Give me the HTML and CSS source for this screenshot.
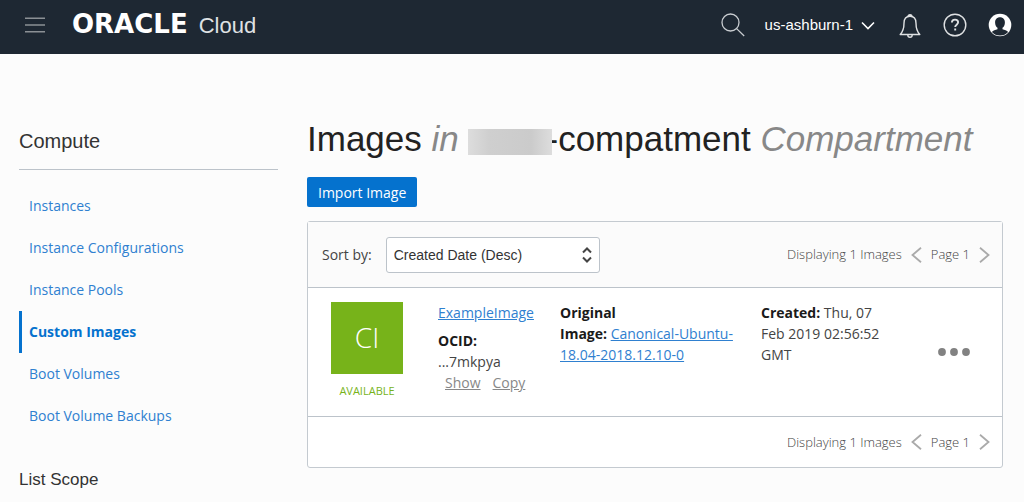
FILE: index.html
```html
<!DOCTYPE html>
<html lang="en">
<head>
<meta charset="utf-8">
<title>Custom Images - Oracle Cloud</title>
<link rel="stylesheet" href="styles.css">
</head>
<body>
<header class="topbar">
  <button class="icon-btn menu" aria-label="Menu">
    <svg width="20" height="16" viewBox="0 0 20 16" stroke="#8b9095" stroke-width="1.600"><path d="M0 1.200h20M0 8h20M0 14.800h20"/></svg>
  </button>
  <a class="brand" href="#"><span class="brand-name">ORACLE</span><span class="brand-product">Cloud</span></a>
  <button class="icon-btn search" aria-label="Search">
    <svg width="24" height="24" viewBox="0 0 24 24" fill="none" stroke="#c9cdd1" stroke-width="1.300"><circle cx="9.500" cy="9.500" r="8.500"/><path d="M15.600 15.600l7.600 7.400"/></svg>
  </button>
  <button class="region">us-ashburn-1
    <svg width="14" height="9" viewBox="0 0 14 9" fill="none" stroke="#fff" stroke-width="1.600"><path d="M1 1.500l6 6 6-6"/></svg>
  </button>
  <button class="icon-btn bell" aria-label="Notifications">
    <svg width="22" height="25" viewBox="0 0 22 25" fill="none" stroke="#dfe1e3" stroke-width="1.400" stroke-linejoin="round"><path d="M9 3.700a2 2 0 1 1 4 0M11 3.300c-4 0-6 3-6 7 0 6-1.200 8.500-3.800 11.200h19.600C18.200 18.800 17 16.300 17 10.300c0-4-2-7-6-7zM8.800 22a2.200 2.200 0 0 0 4.400 0"/></svg>
  </button>
  <button class="icon-btn help" aria-label="Help">
    <svg width="24" height="24" viewBox="0 0 24 24" fill="none" stroke="#dfe1e3" stroke-width="1.400"><circle cx="12" cy="12" r="10.800"/><path stroke-width="1.900" d="M8.900 9.600c0-1.900 1.300-3 3.100-3s3.100 1 3.100 2.700c0 2.300-2.900 2.400-2.900 4.700M12.200 15.600v2"/></svg>
  </button>
  <button class="icon-btn user" aria-label="Profile">
    <svg width="24" height="24" viewBox="0 0 24 24"><circle cx="12" cy="12" r="11.300" fill="#fff"/><path fill="#1e2833" d="M12 4.200c-3 0-4.900 2.100-4.900 5.200 0 2.400 1 4.300 2.400 5.300v1.500c-2 .8-4.500 1.200-5.600 2.700 2 2.300 4.900 3.600 8.100 3.600s6.100-1.300 8.100-3.600c-1.100-1.500-3.600-1.900-5.600-2.700v-1.500c1.400-1 2.400-2.900 2.400-5.300 0-3.100-1.900-5.200-4.900-5.200z"/><path fill="#fff" d="M9.600 8.500h4.800v.1z"/></svg>
  </button>
</header>
<div class="layout">
  <aside class="sidebar">
    <h2 class="side-title">Compute</h2>
    <nav>
      <ul class="side-nav">
        <li><a href="#">Instances</a></li>
        <li><a href="#">Instance Configurations</a></li>
        <li><a href="#">Instance Pools</a></li>
        <li><a class="current" href="#" aria-current="page">Custom Images</a></li>
        <li><a href="#">Boot Volumes</a></li>
        <li><a href="#">Boot Volume Backups</a></li>
      </ul>
    </nav>
    <h3 class="scope-title">List Scope</h3>
  </aside>
  <main class="content">
    <h1 class="page-title">Images <em>in</em> <span class="redacted"></span>-compatment <em>Compartment</em></h1>
    <button class="primary">Import Image</button>
    <section class="panel">
      <div class="toolbar">
        <label for="sort">Sort by:</label>
        <div class="select-wrap">
          <select id="sort"><option>Created Date (Desc)</option></select>
          <svg class="select-arrows" width="10" height="16" viewBox="0 0 10 16" fill="none" stroke="#444" stroke-width="2"><path d="M1 5.500l4-4 4 4M1 10.500l4 4 4-4"/></svg>
        </div>
        <div class="pager">
          <span>Displaying 1 Images</span>
          <button class="page-btn" aria-label="Previous page"><svg width="11" height="16" viewBox="0 0 11 16" fill="none" stroke="#aaa" stroke-width="1.800"><path d="M10 .8L1.500 8l8.500 7.200"/></svg></button>
          <span>Page 1</span>
          <button class="page-btn" aria-label="Next page"><svg width="11" height="16" viewBox="0 0 11 16" fill="none" stroke="#aaa" stroke-width="1.800"><path d="M1 .8L9.500 8 1 15.200"/></svg></button>
        </div>
      </div>
      <article class="image-row">
        <div class="status"><div class="tile">CI</div><div class="state">AVAILABLE</div></div>
        <div class="identity">
          <a href="#">ExampleImage</a>
          <div class="ocid"><b>OCID:</b><br>...7mkpya<br><span class="ocid-actions"><a href="#">Show</a><a href="#">Copy</a></span></div>
        </div>
        <div><b>Original<br>Image:</b> <a href="#">Canonical-Ubuntu-<br>18.04-2018.12.10-0</a></div>
        <div><b>Created:</b> Thu, 07<br>Feb 2019 02:56:52<br>GMT</div>
        <button class="more" aria-label="Actions"><svg width="32" height="8" viewBox="0 0 32 8" fill="#828282"><circle cx="4" cy="4" r="3.900"/><circle cx="16" cy="4" r="3.900"/><circle cx="28" cy="4" r="3.900"/></svg></button>
      </article>
      <div class="footer">
        <div class="pager">
          <span>Displaying 1 Images</span>
          <button class="page-btn" aria-label="Previous page"><svg width="11" height="16" viewBox="0 0 11 16" fill="none" stroke="#aaa" stroke-width="1.800"><path d="M10 .8L1.500 8l8.500 7.200"/></svg></button>
          <span>Page 1</span>
          <button class="page-btn" aria-label="Next page"><svg width="11" height="16" viewBox="0 0 11 16" fill="none" stroke="#aaa" stroke-width="1.800"><path d="M1 .8L9.500 8 1 15.200"/></svg></button>
        </div>
      </div>
    </section>
  </main>
</div>
</body>
</html>
```
FILE: styles.css
```css
* { box-sizing: border-box; }

body {
  margin: 0;
  background: #fcfcfc;
  color: #444;
  font: 14px/21px "Open Sans", "Noto Sans", sans-serif;
}

a { color: #2f80d0; }
b { color: #1a1a1a; }
svg { display: block; }
h1, h2, h3, ul { margin: 0; padding: 0; }

button {
  margin: 0;
  padding: 0;
  border: 0;
  background: none;
  color: inherit;
  font: inherit;
}

.topbar {
  display: flex;
  align-items: center;
  height: 54px;
  padding: 0 12px 4px 25px;
  background: #1e2833;
  color: #fff;
}

.brand {
  display: flex;
  align-items: baseline;
  gap: 11px;
  margin-left: 27px;
  color: #fff;
  text-decoration: none;
}

.brand-name { font: bold 26px/28px "DejaVu Sans", sans-serif; }
.brand-product { color: #dfe1e3; font: 22px/28px "Liberation Sans", sans-serif; }
.search { margin-left: auto; }

.region {
  display: flex;
  align-items: center;
  gap: 8px;
  margin: 0 24px 0 20px;
  font: 15px/20px "Liberation Sans", sans-serif;
}

.help { margin: 0 21px 0 22px; }

.layout {
  display: grid;
  grid-template-columns: 259px minmax(0, 1fr);
  column-gap: 29px;
  padding: 65px 21px 12px 19px;
}

.side-title {
  padding: 10px 0 16px;
  border-bottom: 1px solid #bcc3ca;
  color: #333;
  font: 20px/24px "Liberation Sans", sans-serif;
}

.side-nav {
  padding-top: 15px;
  list-style: none;
}

.side-nav a {
  display: block;
  padding-left: 7px;
  border-left: 3px solid transparent;
  line-height: 42px;
  text-decoration: none;
}

.side-nav .current {
  border-color: #0572ce;
  color: #0572ce;
  font-weight: bold;
}

.scope-title {
  padding-top: 32px;
  color: #333;
  font: 17px/22px "Liberation Sans", sans-serif;
}

.page-title {
  color: #222;
  font: 35px/40px "Liberation Sans", sans-serif;
}

.page-title em { color: #888; }

/* Masks the name and the start of the hyphen that follows it. */
.redacted {
  display: inline-block;
  position: relative;
  width: 84px;
  height: 26px;
  margin-right: -6px;
  background: linear-gradient(90deg, #ddd, #cfcfcf 25%, #cbcbcb 75%, #ddd);
  vertical-align: -4px;
}

.primary {
  display: block;
  height: 30px;
  margin: 18px 0 14px;
  padding: 0 11px;
  border-radius: 2px;
  background: #0572ce;
  color: #fff;
}

.panel {
  border: 1px solid #c4cad0;
  border-radius: 3px;
  background: #fff;
}

.toolbar {
  display: flex;
  align-items: center;
  gap: 14px;
  height: 65px;
  padding: 0 12px 0 14px;
  background: #fbfbfb;
}

.select-wrap { position: relative; }

select {
  width: 214px;
  height: 36px;
  padding: 0 7px;
  border: 1px solid #bcc3ca;
  border-radius: 3px;
  appearance: none;
  background: #fff;
  color: #333;
  font: 14px "Liberation Sans", sans-serif;
}

.select-arrows {
  position: absolute;
  top: 10px;
  right: 8px;
  pointer-events: none;
}

.pager {
  display: flex;
  align-items: center;
  gap: 9px;
  margin-left: auto;
  font-size: 13px;
  font-weight: 300;
}

.image-row {
  display: grid;
  grid-template-columns: 79px 94px 173px 149px 32px;
  column-gap: 28px;
  justify-content: start;
  height: 130px;
  padding: 14px 23px;
  border: solid #bcc3ca;
  border-width: 1px 0;
}

.status { width: 72px; }

.tile {
  height: 72px;
  background: #77b31a;
  color: #fff;
  font-size: 28px;
  font-weight: 300;
  line-height: 70px;
  text-align: center;
}

.state {
  margin-top: 6px;
  color: #77b31a;
  font-size: 11px;
  text-align: center;
}

.ocid { margin-top: 7px; }

.ocid-actions {
  display: flex;
  gap: 12px;
  margin-left: 7px;
}

.ocid-actions a { color: #888; }
.more { justify-self: end; }

.footer {
  display: flex;
  align-items: center;
  height: 50px;
  padding-right: 12px;
}
```
